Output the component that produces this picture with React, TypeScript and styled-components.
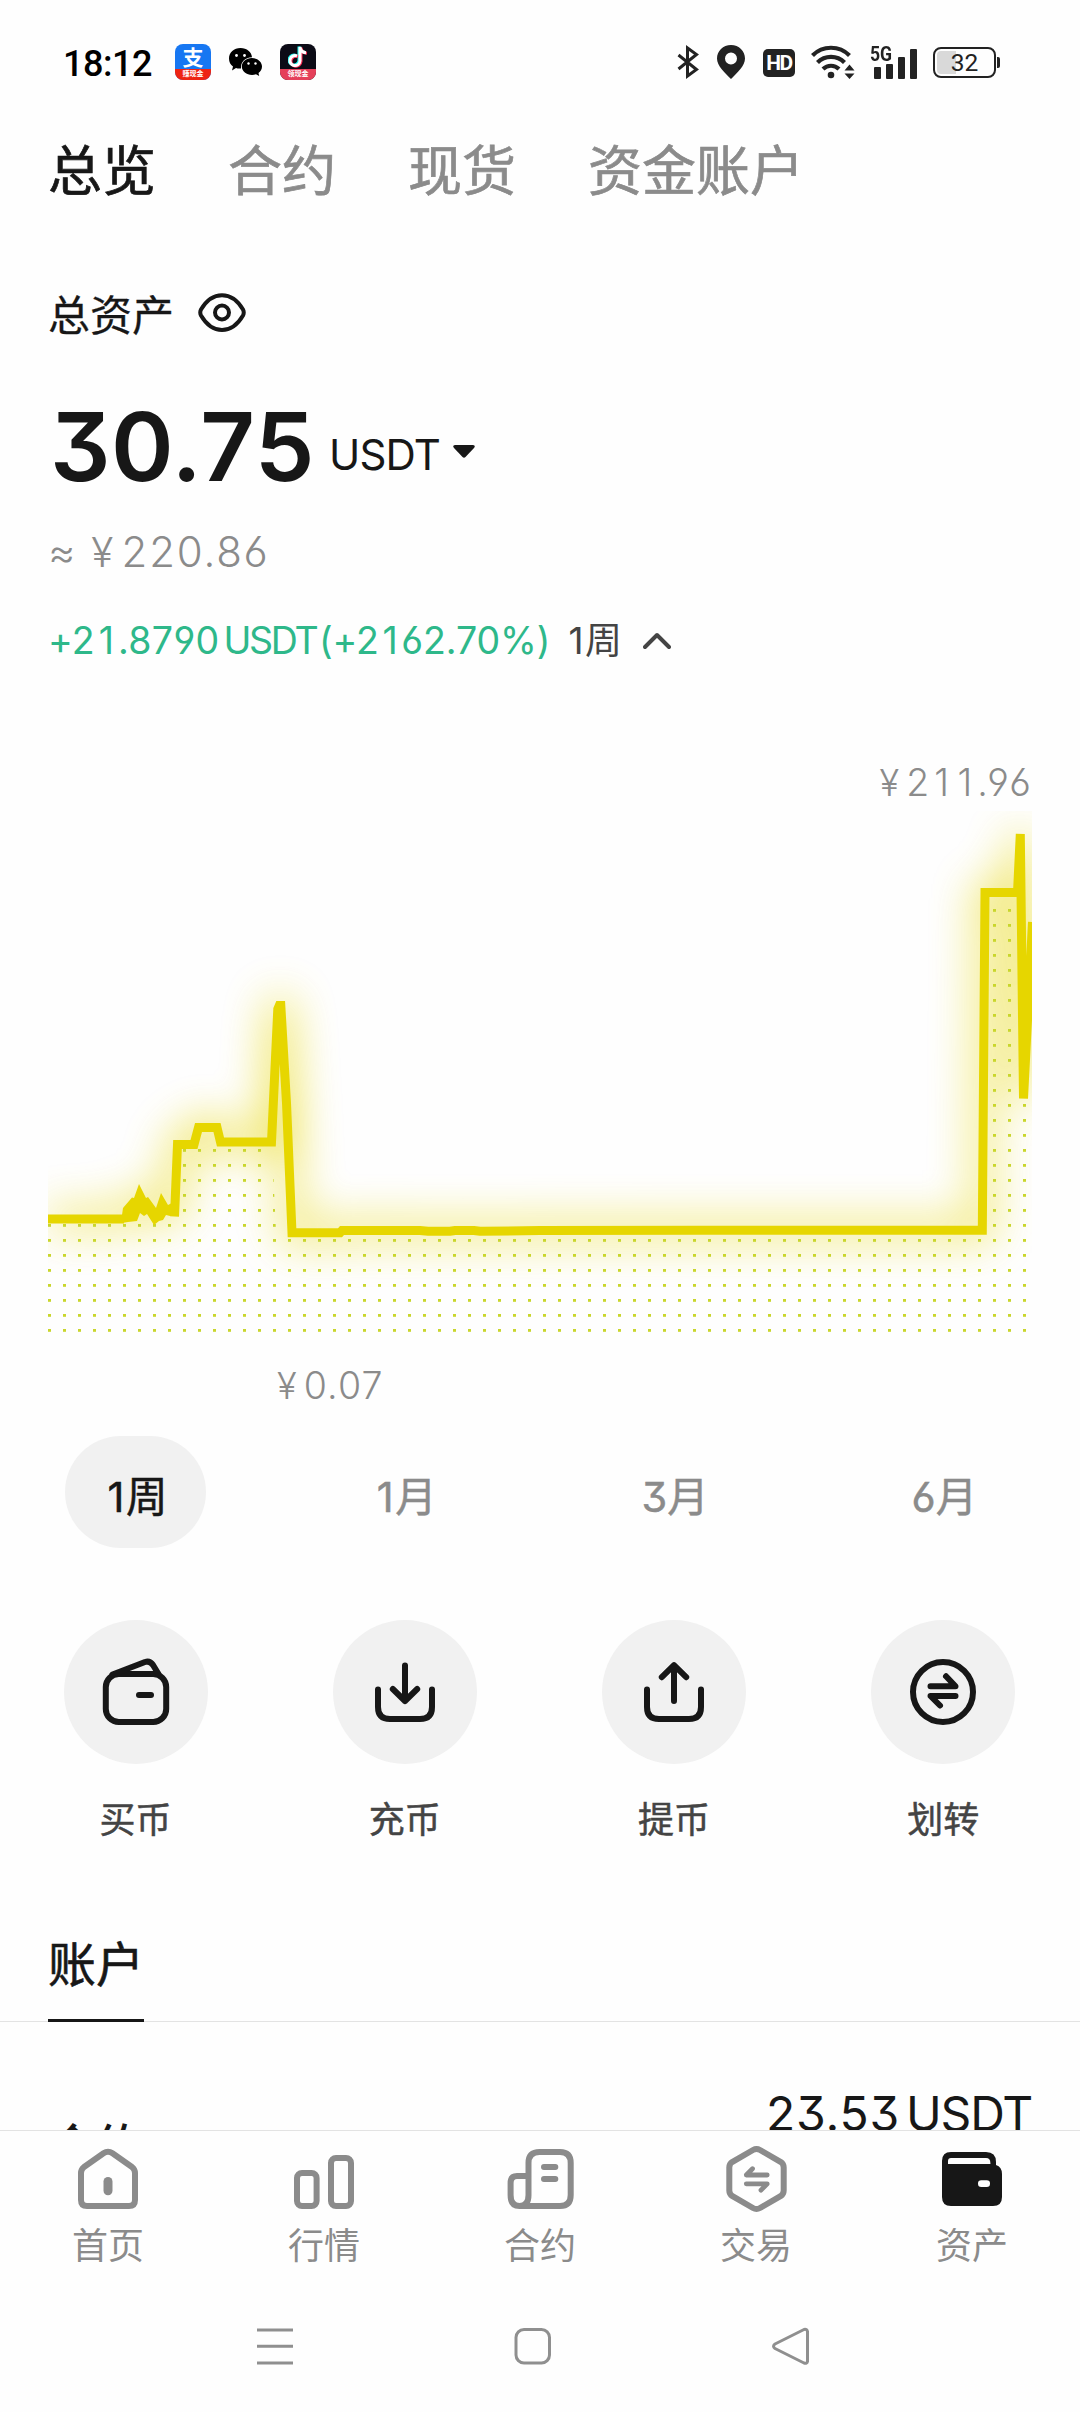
import React from "react";
import styled, { createGlobalStyle } from "styled-components";

const INK = "#171717";
const MUTED = "#8b8b8b";
const YELLOW = "#e6d600";
const GREEN = "#2eb88a";

const GlobalStyle = createGlobalStyle`
  body {
    margin: 0;
    background: #fefefe;
    font-family: "Inter", "Noto Sans CJK SC", sans-serif;
    font-feature-settings: "cv09", "cv03", "cv04";
    color: ${INK};
    overflow: hidden;
  }
`;

const Screen = styled.div`
  width: 1080px;
  height: 2412px;
  display: flex;
  flex-direction: column;
  overflow: hidden;
`;

/* ---------- status bar ---------- */

const StatusBar = styled.header`
  height: 124px;
  flex: none;
  display: flex;
  align-items: center;
  justify-content: space-between;
  padding: 0 80px 0 63px;
  font-family: Roboto, sans-serif;
  font-feature-settings: normal;
`;

const StatusGroup = styled.div<{ $gap: number }>`
  display: flex;
  align-items: center;
  gap: ${(p) => p.$gap}px;
`;

const Clock = styled.span`
  width: 94px;
  margin-top: 3px;
  font-size: 36px;
  font-weight: 500;
  letter-spacing: -0.5px;
  color: #000;
`;

const AppBadge = styled.span<{ $bg: string }>`
  width: 36px;
  height: 36px;
  border-radius: 8px;
  display: flex;
  flex-direction: column;
  background: ${(p) => p.$bg};
  color: #fff;
`;

const AppGlyph = styled.span`
  height: 25px;
  display: flex;
  align-items: center;
  justify-content: center;
  font: 700 21px/25px "Noto Sans CJK SC", sans-serif;
`;

const AppRibbon = styled.span<{ $bg: string }>`
  height: 11px;
  border-radius: 0 0 8px 8px;
  background: ${(p) => p.$bg};
  font: 700 7px/9px "Noto Sans CJK SC", sans-serif;
  text-align: center;
`;

const HdBadge = styled.span`
  width: 32px;
  height: 28px;
  margin-top: 2px;
  border-radius: 5px;
  background: #222;
  color: #fff;
  font-size: 21px;
  font-weight: 700;
  line-height: 29px;
  letter-spacing: -1.5px;
  text-align: center;
`;

const Signal = styled.span`
  position: relative;
  width: 46px;
  height: 34px;
  display: flex;
  align-items: flex-end;
  gap: 5.4px;
  padding-left: 3px;
  box-sizing: border-box;
`;

const SignalBar = styled.i<{ $h: number }>`
  width: 6.6px;
  height: ${(p) => p.$h}px;
  border-radius: 1px;
  background: #222;
`;

const SignalLabel = styled.b`
  position: absolute;
  left: -1px;
  top: -1px;
  font-size: 20px;
  line-height: 20px;
  font-weight: 700;
  color: #222;
  transform: scaleX(0.88);
  transform-origin: left;
`;

const BatteryWrap = styled.span`
  display: flex;
  align-items: center;
  gap: 1px;
`;

const Battery = styled.span`
  width: 63px;
  height: 31px;
  margin-top: 1px;
  box-sizing: border-box;
  padding: 2px;
  border: 2.5px solid #222;
  border-radius: 8px;
  font-size: 24.5px;
  line-height: 23px;
  text-align: center;
  color: #222;
  background: linear-gradient(90deg, #d9d9d9 19px, transparent 19px) content-box;
`;

const BatteryNub = styled.i`
  width: 3px;
  height: 11px;
  border-radius: 0 2px 2px 0;
  background: #222;
`;

/* ---------- tabs and balance ---------- */

const Tabs = styled.nav`
  height: 92px;
  flex: none;
  display: flex;
  align-items: center;
  gap: 72px;
  padding-left: 48px;
`;

const Tab = styled.span<{ $active?: boolean }>`
  padding-top: 3px;
  font-size: 54px;
  line-height: 92px;
  -webkit-text-stroke: 0.7px currentColor;
  color: ${(p) => (p.$active ? INK : MUTED)};
`;

const Summary = styled.section`
  flex: none;
  height: 536px;
  box-sizing: border-box;
  padding: 68px 48px 0;
  display: flex;
  flex-direction: column;
`;

const TitleRow = styled.div`
  height: 60px;
  display: flex;
  align-items: center;
  gap: 24px;
  font-size: 42px;
  line-height: 60px;
`;

const TitleText = styled.span`
  padding-top: 3px;
  -webkit-text-stroke: 0.3px currentColor;
`;

const EyeIcon = styled.svg`
  width: 48px;
  height: 40px;
  margin-bottom: 3px;
  fill: none;
  stroke: ${INK};
  stroke-width: 4;
`;

const BalanceRow = styled.div`
  height: 96px;
  margin-top: 56px;
  padding-left: 2px;
  display: flex;
  align-items: flex-end;
`;

const Balance = styled.span`
  width: 279px;
  margin-bottom: 1px;
  font-size: 95px;
  line-height: 96px;
  font-weight: 600;
  letter-spacing: 0.5px;
`;

const Currency = styled.span`
  margin: 0 13px 11px 0;
  font-size: 42px;
  line-height: 60px;
  letter-spacing: -0.8px;
`;

const Caret = styled.svg`
  width: 22px;
  height: 48px;
  margin-bottom: 12px;
  fill: ${INK};
`;

const FiatRow = styled.div`
  height: 60px;
  margin-top: 26px;
  display: flex;
  gap: 14px;
  font-size: 42px;
  line-height: 60px;
  font-weight: 300;
  letter-spacing: 1.8px;
  color: ${MUTED};
`;

const Yen = styled.span`
  font-size: 0.97em;
  margin-right: 0.16em;
`;

/* The digit 1 is narrow; this gives it the width of the other digits. */
const One = styled.span.attrs({ children: "1" })<{ $pad?: number }>`
  padding: 0 ${(p) => p.$pad ?? 0.1}em;
`;

const ChangeRow = styled.div`
  height: 56px;
  margin-top: 31px;
  display: flex;
  align-items: center;
  font-size: 37.5px;
  line-height: 56px;
`;

const Change = styled.span`
  width: 519px;
  color: ${GREEN};
  white-space: nowrap;
`;

const Spaced = styled.span<{ $spacing: number; $after?: number }>`
  letter-spacing: ${(p) => p.$spacing}px;
  margin-right: ${(p) => p.$after ?? 0}px;
`;

const Period = styled.span`
  width: 76px;
  font-size: 37px;
  color: #444;
`;

/* ---------- chart ---------- */

const ChartBlock = styled.section`
  flex: none;
  height: 664px;
  display: flex;
  flex-direction: column;
  padding: 0 48px;
`;

const ChartLabel = styled.div<{ $align: "left" | "right"; $indent?: number }>`
  height: ${(p) => (p.$align === "right" ? 59 : 61)}px;
  font-size: 37.5px;
  font-weight: 300;
  line-height: 61px;
  letter-spacing: 1.2px;
  color: ${MUTED};
  text-align: ${(p) => p.$align};
  padding-left: ${(p) => p.$indent ?? 0}px;
`;

const ChartSvg = styled.svg`
  display: block;
  width: 984px;
  height: 544px;
`;

/* ---------- period and actions ---------- */

const Columns = styled.div<{ $height: number; $top: number }>`
  flex: none;
  display: grid;
  grid-template-columns: repeat(4, 1fr);
  justify-items: center;
  height: ${(p) => p.$height}px;
  margin-top: ${(p) => p.$top}px;
  padding: 0 2px 0 1px;
`;

const PeriodChip = styled.span<{ $active?: boolean }>`
  width: 141px;
  height: 112px;
  box-sizing: border-box;
  padding: 8px 0 0 2px;
  border-radius: 56px;
  background: ${(p) => (p.$active ? "#f1f1f1" : "transparent")};
  color: ${(p) => (p.$active ? INK : MUTED)};
  font-size: 41.5px;
  line-height: 106px;
  text-align: center;
  -webkit-text-stroke: 0.5px currentColor;
`;

const Action = styled.div`
  display: flex;
  flex-direction: column;
  align-items: center;
  gap: 28px;
  font-size: 36px;
  line-height: 56px;
  color: #444;
  -webkit-text-stroke: 0.5px currentColor;
`;

const ActionIcon = styled.svg`
  width: 144px;
  height: 144px;
  border-radius: 50%;
  background: #f1f1f1;
  fill: none;
  stroke: ${INK};
  stroke-width: 6;
  stroke-linecap: round;
  stroke-linejoin: round;
`;

/* ---------- accounts ---------- */

const AccountTabs = styled.div`
  flex: none;
  height: 91px;
  margin-top: 82px;
  padding-left: 48px;
  border-bottom: 1px solid #e3e3e3;
  display: flex;
`;

const AccountTab = styled.span`
  height: 89px;
  border-bottom: 3px solid ${INK};
  font-size: 48px;
  line-height: 70px;
  -webkit-text-stroke: 0.6px currentColor;
`;

const AccountRow = styled.div`
  flex: 1;
  min-height: 0;
  overflow: hidden;
  padding: 66px 48px 0;
  display: flex;
  justify-content: space-between;
`;

const AccountName = styled.span`
  font-size: 48px;
  font-weight: 500;
  line-height: 70px;
  padding-top: 24px;
`;

const AccountValue = styled.span`
  font-size: 48px;
  line-height: 52px;
`;

/* ---------- bottom bars ---------- */

const NavBar = styled.nav`
  flex: none;
  height: 150px;
  border-top: 1px solid #e3e3e3;
  display: grid;
  grid-template-columns: repeat(5, 1fr);
`;

const NavItem = styled.div`
  display: flex;
  flex-direction: column;
  align-items: center;
  padding-top: 12px;
  font-size: 36px;
  line-height: 56px;
  color: ${MUTED};
  gap: 3px;
`;

const NavIcon = styled.svg`
  width: 72px;
  height: 72px;
  fill: none;
  stroke: ${MUTED};
  stroke-width: 6;
  stroke-linecap: round;
  stroke-linejoin: round;
`;

const SystemBar = styled.footer`
  flex: none;
  height: 131px;
  box-sizing: border-box;
  display: flex;
  justify-content: space-between;
  align-items: center;
  padding: 0 269px 2px 255px;
`;

const SystemIcon = styled.svg`
  width: 40px;
  height: 40px;
  fill: none;
  stroke: #8f8f8f;
  stroke-width: 3;
  stroke-linejoin: round;
`;

/* Chart geometry: a 984 x 544 box whose own origin is (48, 811). */
const SERIES = [
  "48,1219 124,1219",
  "174.5,1216.5 177.5,1144.5 194,1144.5 198.5,1127.5 217,1127.5 220.5,1142 271.5,1142 277.8,1009 279.3,1005.5 280.8,1005.5 286.5,1103 292,1232.7 340,1232.7 342,1230.5 420,1230.5 428,1231.3 450,1231.3 455,1230.5 474,1230.5 480,1231.3 540,1230.5 700,1230.3 982.3,1230.3 985,892.6 1017.5,892.6 1020.3,834 1023.5,1098.5 1032.5,922",
];
const NOISE =
  "122,1215 123,1208 132,1197.5 134,1198 139,1184 146,1198 148,1197 156,1208 161,1193 168,1205 172,1203 178.5,1216 170,1216 166,1215 163,1220 159,1221 154,1225 147,1214 144,1216 140,1213 137,1221 128,1222 122,1223";
const AREA =
  "48,1222 124,1222 170,1214 176,1146 272,1146 276,1232 984,1232 988,894 1017,894 1020,1100 1032,1100 1032,1335 48,1335";

function BalanceChart() {
  return (
    <ChartSvg viewBox="48 811 984 544">
      <defs>
        <pattern id="dots" x="48" y="1239" width="15" height="15" patternUnits="userSpaceOnUse">
          <rect width="3" height="2.8" fill="#c9d62c" />
        </pattern>
        <filter id="glow" filterUnits="userSpaceOnUse" x="-60" y="740" width="1200" height="660">
          <feGaussianBlur stdDeviation="22" />
        </filter>
      </defs>
      <g filter="url(#glow)" fill="none" stroke={YELLOW} strokeWidth="17" opacity="0.75">
        {SERIES.map((s) => (
          <polyline key={s} points={s} />
        ))}
        <polygon points={NOISE} fill={YELLOW} stroke="none" />
      </g>
      <polygon points={AREA} fill="url(#dots)" />
      <g fill="none" stroke={YELLOW} strokeWidth="9">
        {SERIES.map((s) => (
          <polyline key={s} points={s} />
        ))}
      </g>
      <polygon points={NOISE} fill={YELLOW} />
    </ChartSvg>
  );
}

const actions = [
  {
    label: "买币",
    icon: (
      <>
        <rect x="41.8" y="54" width="60.4" height="48" rx="13" />
        <path d="M48.5 54.5 81 42Q86 40.5 89 45L94.5 54" />
        <path d="M75 75H87" />
      </>
    ),
  },
  {
    label: "充币",
    icon: (
      <>
        <path d="M45 69.5V87Q45 99 57 99H87Q99 99 99 87V69.5" />
        <path d="M72 45.5V81M59.8 69 72 81 84.2 69" />
      </>
    ),
  },
  {
    label: "提币",
    icon: (
      <>
        <path d="M45 69.5V87Q45 99 57 99H87Q99 99 99 87V69.5" />
        <path d="M72 81V45.5M59.8 57.2 72 45.2 84.2 57.2" />
      </>
    ),
  },
  {
    label: "划转",
    icon: (
      <>
        <circle cx="72" cy="72" r="30" />
        <path d="M59.5 66.3H84.5L75 56.3M84.5 76H59.5L69 85.5" />
      </>
    ),
  },
];

const navItems = [
  {
    label: "首页",
    icon: (
      <>
        <path d="M9 30Q9 26.5 12 24L31.5 10.3Q36 7.3 40.5 10.3L60 24Q63 26.5 63 30V57Q63 63 57 63H15Q9 63 9 57Z" />
        <rect x="31.5" y="34" width="9" height="18.3" rx="4.5" fill={MUTED} stroke="none" />
      </>
    ),
  },
  {
    label: "行情",
    icon: (
      <>
        <rect x="9" y="30" width="19.6" height="33" rx="5" />
        <rect x="43" y="15" width="20" height="48" rx="5" />
      </>
    ),
  },
  {
    label: "合约",
    icon: (
      <>
        <path d="M24.5 33H13Q6.6 33 6.6 40V52Q6.6 63 15.5 63 24.5 63 24.5 52V20Q24.5 9 35.5 9H56Q66.7 9 66.7 20V52Q66.7 63 56 63H15.5" />
        <path d="M40 24H51.3M40 36H51.3" />
      </>
    ),
  },
  {
    label: "交易",
    icon: (
      <>
        <path d="M33 7Q36.5 5 40 7L60.5 18.8Q63.7 20.8 63.7 24.5V47.5Q63.7 51.2 60.5 53.2L40 65Q36.5 67 33 65L12.5 53.2Q9.3 51.2 9.3 47.5V24.5Q9.3 20.8 12.5 18.8Z" />
        <path strokeWidth="4.8" d="M47.2 32H26.3L32.5 25.8M26.3 40.8H47.2L41 47.2" />
      </>
    ),
  },
  {
    label: "资产",
    icon: (
      <>
        <path
          fill={INK}
          stroke="none"
          d="M15 9H50Q60 9 60 19V22Q66 24 66 31V54Q66 63 57 63H15Q6 63 6 54V18Q6 9 15 9Z"
        />
        <path fill="#fefefe" stroke="none" d="M15 15H50Q54.4 15 54.4 20V21H12V18Q12 15 15 15Z" />
        <rect x="42" y="37.3" width="12" height="6.7" rx="3.3" fill="#fefefe" stroke="none" />
      </>
    ),
  },
];

export default function App() {
  return (
    <Screen>
      <GlobalStyle />
      <StatusBar>
        <StatusGroup $gap={18}>
          <Clock>18:12</Clock>
          <AppBadge $bg="#1777f2">
            <AppGlyph>支</AppGlyph>
            <AppRibbon $bg="#ee2413">赚现金</AppRibbon>
          </AppBadge>
          <svg width="33" height="28" viewBox="0 0 33 28">
            <path
              fill="#000"
              d="M11.5 0C18 0 22.5 4 23 9.2 16 9.5 11.5 14 12 20.5 10 20.8 8.3 20.5 7 20L3 22.5 4 18.5C1.5 16.7 0 14 0 10.5 0 4.5 5 0 11.5 0Z"
            />
            <path
              fill="#000"
              d="M22.8 10C28.5 10 33 13.8 33 18.5 33 21.3 31.5 23.5 29.5 25L30.2 28 27 26.3C20 28.5 12.8 24.5 12.8 18.5 12.8 13.8 17.2 10 22.8 10Z"
            />
            <g fill="#fefefe">
              <circle cx="7.5" cy="7.5" r="1.4" />
              <circle cx="15.5" cy="7.5" r="1.4" />
              <circle cx="19.5" cy="15.5" r="1.2" />
              <circle cx="26.5" cy="15.5" r="1.2" />
            </g>
          </svg>
          <AppBadge $bg="#0c0b16">
            <AppGlyph>
              <svg width="20" height="23" viewBox="0 0 20 23" fill="none" strokeWidth="3">
                <path stroke="#25f4ee" d="M8.2 10.5A5 5 0 1 0 11 15.5V1.5C11.5 5 14 7 17 7.2" />
                <path stroke="#fe2c55" d="M10 11.7A5 5 0 1 0 13 16.5V2.7C13.5 6 15.5 8 19 8.2" />
                <path stroke="#fff" d="M9 11A5 5 0 1 0 12 16V2C12.5 5.5 15 7.5 18 7.7" />
              </svg>
            </AppGlyph>
            <AppRibbon $bg="#e5405a">领现金</AppRibbon>
          </AppBadge>
        </StatusGroup>
        <StatusGroup $gap={16}>
          <svg width="22" height="34" viewBox="0 0 22 34" fill="none" stroke="#222" strokeWidth="3">
            <path d="M1.5 10 19.5 24.5 10.5 31V3L19.5 9.5 1.5 24" />
          </svg>
          <svg width="32" height="34" viewBox="-2 0 32 34">
            <path
              fill="#222"
              fillRule="evenodd"
              d="M14 0C22 0 28 6 28 13.5 28 21 20 28 14 34 8 28 0 21 0 13.5 0 6 6 0 14 0ZM14 7.5A6 6 0 1 0 14 19.5 6 6 0 0 0 14 7.5Z"
            />
          </svg>
          <HdBadge>HD</HdBadge>
          <svg width="44" height="34" viewBox="0 0 44 34">
            <g fill="none" stroke="#222" strokeWidth="4.2">
              <path d="M1.5 10.5A26 26 0 0 1 38.5 10.5" />
              <path d="M6.5 17.5A19 19 0 0 1 33.5 17.5" />
              <path d="M12 24A11.5 11.5 0 0 1 28 24" />
            </g>
            <circle cx="20" cy="30" r="3.3" fill="#222" />
            <path fill="#222" d="M38.5 19.5 43.5 25.5H33.5ZM38.5 34 43.5 28.5H33.5Z" />
          </svg>
          <Signal>
            <SignalLabel>5G</SignalLabel>
            <SignalBar $h={12} />
            <SignalBar $h={15} />
            <SignalBar $h={22} />
            <SignalBar $h={30} />
          </Signal>
          <BatteryWrap>
            <Battery>32</Battery>
            <BatteryNub />
          </BatteryWrap>
        </StatusGroup>
      </StatusBar>

      <Tabs>
        <Tab $active>总览</Tab>
        <Tab>合约</Tab>
        <Tab>现货</Tab>
        <Tab>资金账户</Tab>
      </Tabs>

      <Summary>
        <TitleRow>
          <TitleText>总资产</TitleText>
          <EyeIcon viewBox="0 0 48 40">
            <path d="M3 16.5C8 8 15 2.2 24 2.2S40 8 45 16.5Q46.5 19.5 45 22.5C40 31 33 37 24 37S8 31 3 22.5Q1.5 19.5 3 16.5Z" />
            <circle cx="24" cy="19.5" r="7" />
          </EyeIcon>
        </TitleRow>
        <BalanceRow>
          <Balance>30.75</Balance>
          <Currency>USDT</Currency>
          <Caret viewBox="0 0 22 48">
            <path d="M2 9H20Q23 9.5 21 12L12.5 21Q11 22.5 9.5 21L1 12Q-1 9.5 2 9Z" />
          </Caret>
        </BalanceRow>
        <FiatRow>
          <span>≈</span>
          <span>
            <Yen>¥</Yen>220.86
          </span>
        </FiatRow>
        <ChangeRow>
          <Change>
            <Spaced $spacing={0.3} $after={4}>
              +2<One />.8790
            </Spaced>
            <Spaced $spacing={-2.3} $after={2.5}>USDT</Spaced>
            <Spaced $spacing={-0.1}>
              (+2<One />62.70%)
            </Spaced>
          </Change>
          <Period>
            <One $pad={0.04} />周
          </Period>
          <svg width="28" height="18" viewBox="0 0 28 18" fill="none" stroke="#444" strokeWidth="4" strokeLinecap="round" strokeLinejoin="round">
            <path d="M2 15 14 3 26 15" />
          </svg>
        </ChangeRow>
      </Summary>

      <ChartBlock>
        <ChartLabel $align="right">
          <Yen>¥</Yen>2<One />
          <One />.96
        </ChartLabel>
        <BalanceChart />
        <ChartLabel $align="left" $indent={229}>
          <Yen>¥</Yen>0.07
        </ChartLabel>
      </ChartBlock>

      <Columns $height={112} $top={20}>
        <PeriodChip $active>
          <One $pad={0.04} />周
        </PeriodChip>
        <PeriodChip>
          <One $pad={0.04} />月
        </PeriodChip>
        <PeriodChip>3月</PeriodChip>
        <PeriodChip>6月</PeriodChip>
      </Columns>

      <Columns $height={228} $top={72}>
        {actions.map((a) => (
          <Action key={a.label}>
            <ActionIcon viewBox="0 0 144 144">{a.icon}</ActionIcon>
            {a.label}
          </Action>
        ))}
      </Columns>

      <AccountTabs>
        <AccountTab>账户</AccountTab>
      </AccountTabs>
      <AccountRow>
        <AccountName>合约</AccountName>
        <AccountValue>
          <Spaced $spacing={0.8} $after={6}>23.53</Spaced>
          <Spaced $spacing={-1.2}>USDT</Spaced>
        </AccountValue>
      </AccountRow>

      <NavBar>
        {navItems.map((n) => (
          <NavItem key={n.label}>
            <NavIcon viewBox="0 0 72 72">{n.icon}</NavIcon>
            {n.label}
          </NavItem>
        ))}
      </NavBar>

      <SystemBar>
        <SystemIcon viewBox="0 0 40 40">
          <path d="M2 4H38M2 20.3H38M2 37H38" />
        </SystemIcon>
        <SystemIcon viewBox="0 0 40 40">
          <rect x="3" y="3.5" width="33.5" height="33.5" rx="8" />
        </SystemIcon>
        <SystemIcon viewBox="0 0 40 40">
          <path d="M4 18 33 3.5Q36 2.8 36.5 5.500V35.500Q36 38 33 37L4 22.500Q1 20.300 4 18Z" />
        </SystemIcon>
      </SystemBar>
    </Screen>
  );
}
